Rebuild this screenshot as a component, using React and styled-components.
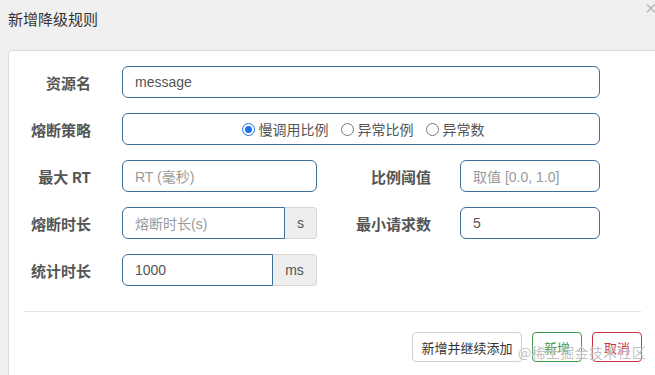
import React from "react";
import styled, { createGlobalStyle } from "styled-components";

const Global = createGlobalStyle`
  html, body { margin: 0; padding: 0; background: #f0f0f0; overflow: hidden; }
  body { font-family: "Liberation Sans", "Noto Sans CJK SC", sans-serif; }
  * { box-sizing: border-box; }
`;

const Page = styled.div`
  position: relative;
  width: 655px;
  height: 375px;
  overflow: hidden;
  background: #f0f0f0;
`;

const Header = styled.div`
  height: 50px;
  display: flex;
  align-items: center;
  padding: 0 0 14px 8px;
  font-size: 15px;
  color: #333;
  font-family: "Noto Sans CJK SC", sans-serif;
`;

const Close = styled.span`
  position: absolute;
  top: -3px;
  left: 645px;
  font-size: 20px;
  color: #bbb;
  font-family: "Liberation Sans", sans-serif;
`;

const Panel = styled.div`
  margin-left: 8px;
  width: 660px;
  height: 340px;
  background: #fff;
  border: 1px solid #dcdcdc;
  border-radius: 4px;
  padding-top: 15px;
`;

const Form = styled.div`
  display: grid;
  grid-template-columns: 113px 195px 143px 140px;
  grid-auto-rows: 32px;
  row-gap: 15px;
`;

const Label = styled.div`
  display: flex;
  align-items: center;
  justify-content: flex-end;
  padding-right: ${(p) => p.$pr || 31}px;
  font-family: "Noto Sans CJK SC", sans-serif;
  font-weight: 700;
  font-size: 15px;
  color: #555;
  white-space: nowrap;
`;

const Field = styled.div`
  display: flex;
  grid-column: ${(p) => p.$span || "auto"};
`;

const Input = styled.div`
  flex: 1;
  height: 32px;
  display: flex;
  align-items: center;
  padding-left: 12px;
  border: 1px solid #3e6f9c;
  border-radius: ${(p) => (p.$addon ? "6px 0 0 6px" : "6px")};
  font-size: 14px;
  color: ${(p) => (p.$ph ? "#9a9a9a" : "#555")};
  font-family: "Liberation Sans", "Noto Sans CJK SC", sans-serif;
`;

const Addon = styled.div`
  width: ${(p) => p.$w}px;
  height: 32px;
  display: flex;
  align-items: center;
  justify-content: center;
  background: #eeeeee;
  border: 1px solid #d6d6d6;
  border-left: none;
  border-radius: 0 4px 4px 0;
  font-size: 14px;
  color: #555;
`;

const RadioBox = styled.div`
  grid-column: 2 / 5;
  height: 32px;
  border: 1px solid #3e6f9c;
  border-radius: 6px;
  display: flex;
  align-items: center;
  justify-content: center;
  gap: 8px;
`;

const RadioItem = styled.label`
  display: flex;
  align-items: center;
  gap: 4px;
  font-family: "Noto Sans CJK SC", sans-serif;
  font-size: 14px;
  color: #555;
  padding-left: 4px;
`;

const Dot = styled.span`
  width: 13px;
  height: 13px;
  border-radius: 50%;
  border: ${(p) => (p.$on ? "1.5px solid #1a73e8" : "1px solid #777")};
  display: flex;
  align-items: center;
  justify-content: center;
  &::after {
    content: "";
    width: 7px;
    height: 7px;
    border-radius: 50%;
    background: ${(p) => (p.$on ? "#1a73e8" : "transparent")};
  }
`;

const Divider = styled.div`
  margin: 25px 0 0 15px;
  width: 617px;
  border-top: 1px solid #e2e2e2;
`;

const Footer = styled.div`
  width: 633px;
  display: flex;
  justify-content: flex-end;
  gap: 10px;
  padding-top: 20px;
`;

const Button = styled.div`
  height: 30px;
  width: ${(p) => p.$w}px;
  display: flex;
  align-items: center;
  justify-content: center;
  border: 1px solid ${(p) => p.$border};
  border-radius: 4px;
  background: #fff;
  color: ${(p) => p.$color};
  font-family: "Noto Sans CJK SC", sans-serif;
  font-size: 13px;
`;

const Watermark = styled.div`
  position: absolute;
  left: 518px;
  top: 342px;
  font-family: "Noto Sans CJK SC", sans-serif;
  font-size: 14px;
  color: rgba(140, 140, 140, 0.55);
  letter-spacing: 0.3px;
  text-shadow: 0 0 1px #fff;
  pointer-events: none;
`;

export default function App() {
  return (
    <Page>
      <Global />
      <Header>新增降级规则</Header>
      <Close>×</Close>
      <Panel>
        <Form>
          <Label>资源名</Label>
          <Field $span="2 / 5">
            <Input>message</Input>
          </Field>

          <Label>熔断策略</Label>
          <RadioBox>
            <RadioItem><Dot $on />慢调用比例</RadioItem>
            <RadioItem><Dot />异常比例</RadioItem>
            <RadioItem><Dot />异常数</RadioItem>
          </RadioBox>

          <Label>最大 RT</Label>
          <Field>
            <Input $ph>RT (毫秒)</Input>
          </Field>
          <Label $pr={29}>比例阈值</Label>
          <Field>
            <Input $ph>取值 [0.0, 1.0]</Input>
          </Field>

          <Label>熔断时长</Label>
          <Field>
            <Input $ph $addon>熔断时长(s)</Input>
            <Addon $w={32}>s</Addon>
          </Field>
          <Label $pr={29}>最小请求数</Label>
          <Field>
            <Input>5</Input>
          </Field>

          <Label>统计时长</Label>
          <Field>
            <Input $addon>1000</Input>
            <Addon $w={44}>ms</Addon>
          </Field>
        </Form>
        <Divider />
        <Footer>
          <Button $w={110} $border="#cfcfcf" $color="#333">新增并继续添加</Button>
          <Button $w={50} $border="#3f9a4e" $color="#3f9a4e">新增</Button>
          <Button $w={50} $border="#c9343f" $color="#c9343f">取消</Button>
        </Footer>
      </Panel>
      <Watermark>@稀土掘金技术社区</Watermark>
    </Page>
  );
}
